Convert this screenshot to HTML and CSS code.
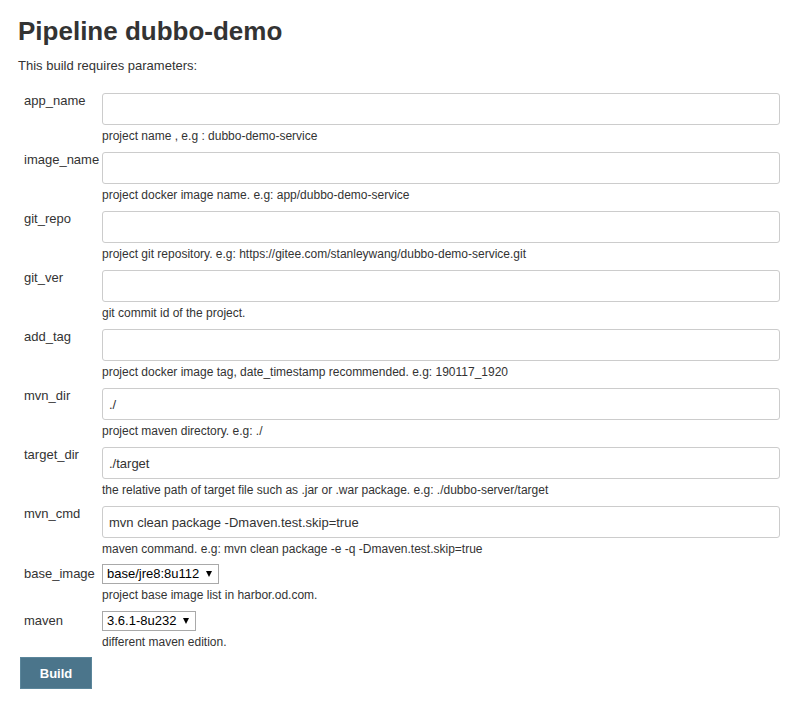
FILE: index.html
```html
<!DOCTYPE html>
<html>
<head>
<meta charset="utf-8">
<title>Pipeline dubbo-demo</title>
<link rel="stylesheet" href="styles.css">
</head>
<body>
<div class="page">
  <h1 class="title">Pipeline dubbo-demo</h1>
  <p class="intro">This build requires parameters:</p>
  <form class="params">
    <div class="row">
      <div class="label">app_name</div>
      <div class="field">
        <input class="text" type="text" value="">
        <div class="hint">project name , e.g : dubbo-demo-service</div>
      </div>
    </div>
    <div class="row">
      <div class="label">image_name</div>
      <div class="field">
        <input class="text" type="text" value="">
        <div class="hint">project docker image name. e.g: app/dubbo-demo-service</div>
      </div>
    </div>
    <div class="row">
      <div class="label">git_repo</div>
      <div class="field">
        <input class="text" type="text" value="">
        <div class="hint">project git repository. e.g: https://gitee.com/stanleywang/dubbo-demo-service.git</div>
      </div>
    </div>
    <div class="row">
      <div class="label">git_ver</div>
      <div class="field">
        <input class="text" type="text" value="">
        <div class="hint">git commit id of the project.</div>
      </div>
    </div>
    <div class="row">
      <div class="label">add_tag</div>
      <div class="field">
        <input class="text" type="text" value="">
        <div class="hint">project docker image tag, date_timestamp recommended. e.g: 190117_1920</div>
      </div>
    </div>
    <div class="row">
      <div class="label">mvn_dir</div>
      <div class="field">
        <input class="text" type="text" value="./">
        <div class="hint">project maven directory. e.g: ./</div>
      </div>
    </div>
    <div class="row">
      <div class="label">target_dir</div>
      <div class="field">
        <input class="text" type="text" value="./target">
        <div class="hint">the relative path of target file such as .jar or .war package. e.g: ./dubbo-server/target</div>
      </div>
    </div>
    <div class="row">
      <div class="label">mvn_cmd</div>
      <div class="field">
        <input class="text" type="text" value="mvn clean package -Dmaven.test.skip=true">
        <div class="hint">maven command. e.g: mvn clean package -e -q -Dmaven.test.skip=true</div>
      </div>
    </div>
    <div class="row row-select first-select">
      <div class="label label-select">base_image</div>
      <div class="field">
        <div class="select"><span class="select-value">base/jre8:8u112</span><span class="select-arrow"></span></div>
        <div class="hint">project base image list in harbor.od.com.</div>
      </div>
    </div>
    <div class="row row-select">
      <div class="label label-select">maven</div>
      <div class="field">
        <div class="select"><span class="select-value">3.6.1-8u232</span><span class="select-arrow"></span></div>
        <div class="hint">different maven edition.</div>
      </div>
    </div>
    <div class="actions">
      <button class="build" type="button">Build</button>
    </div>
  </form>
</div>
</body>
</html>
```
FILE: styles.css
```css
html, body {
  margin: 0;
  padding: 0;
  background: #ffffff;
}

body {
  font-family: "Liberation Sans", Arial, sans-serif;
  color: #333333;
  font-size: 13px;
}

.page {
  padding: 16px 11px 0 18px;
}

.title {
  margin: 0;
  font-size: 26px;
  line-height: 30px;
  font-weight: bold;
  color: #333333;
}

.intro {
  margin: 12px 0 0 0;
  font-size: 13px;
  line-height: 15px;
}

.params {
  margin: 20px 0 0 0;
  display: flex;
  flex-direction: column;
}

.row {
  display: flex;
  align-items: flex-start;
}

.label {
  width: 84px;
  padding-left: 6px;
  box-sizing: border-box;
  font-size: 13px;
  line-height: 15px;
  flex: none;
  white-space: nowrap;
}

.label-select {
  padding-top: 2px;
}

.field {
  flex: 1;
  display: flex;
  flex-direction: column;
  align-items: flex-start;
}

.text {
  width: 100%;
  height: 32px;
  box-sizing: border-box;
  margin: 0;
  border: 1px solid #cccccc;
  border-radius: 3px;
  padding: 0 6px;
  font-family: "Liberation Sans", Arial, sans-serif;
  font-size: 13px;
  color: #333333;
  background: #ffffff;
  outline: none;
}

.hint {
  margin: 4px 0 9px 0;
  font-size: 12px;
  line-height: 14px;
  color: #333333;
}

.first-select {
  margin-top: -1px;
}

.select {
  display: flex;
  align-items: center;
  height: 20px;
  box-sizing: border-box;
  border: 1px solid #a9a9a9;
  padding: 0 6px 0 4px;
  gap: 7px;
  font-size: 13px;
  color: #000000;
  background: #ffffff;
}

.select-value {
  line-height: 18px;
}

.select-arrow {
  width: 0;
  height: 0;
  border-left: 3.5px solid transparent;
  border-right: 3.5px solid transparent;
  border-top: 6px solid #000000;
}

.actions {
  padding-left: 2px;
  margin-top: -1px;
}

.build {
  width: 72px;
  height: 32px;
  box-sizing: border-box;
  border: 1px solid #5b869b;
  background: #4b758b;
  color: #ffffff;
  font-family: "Liberation Sans", Arial, sans-serif;
  font-size: 13px;
  font-weight: bold;
  padding: 0;
  cursor: pointer;
}
```
